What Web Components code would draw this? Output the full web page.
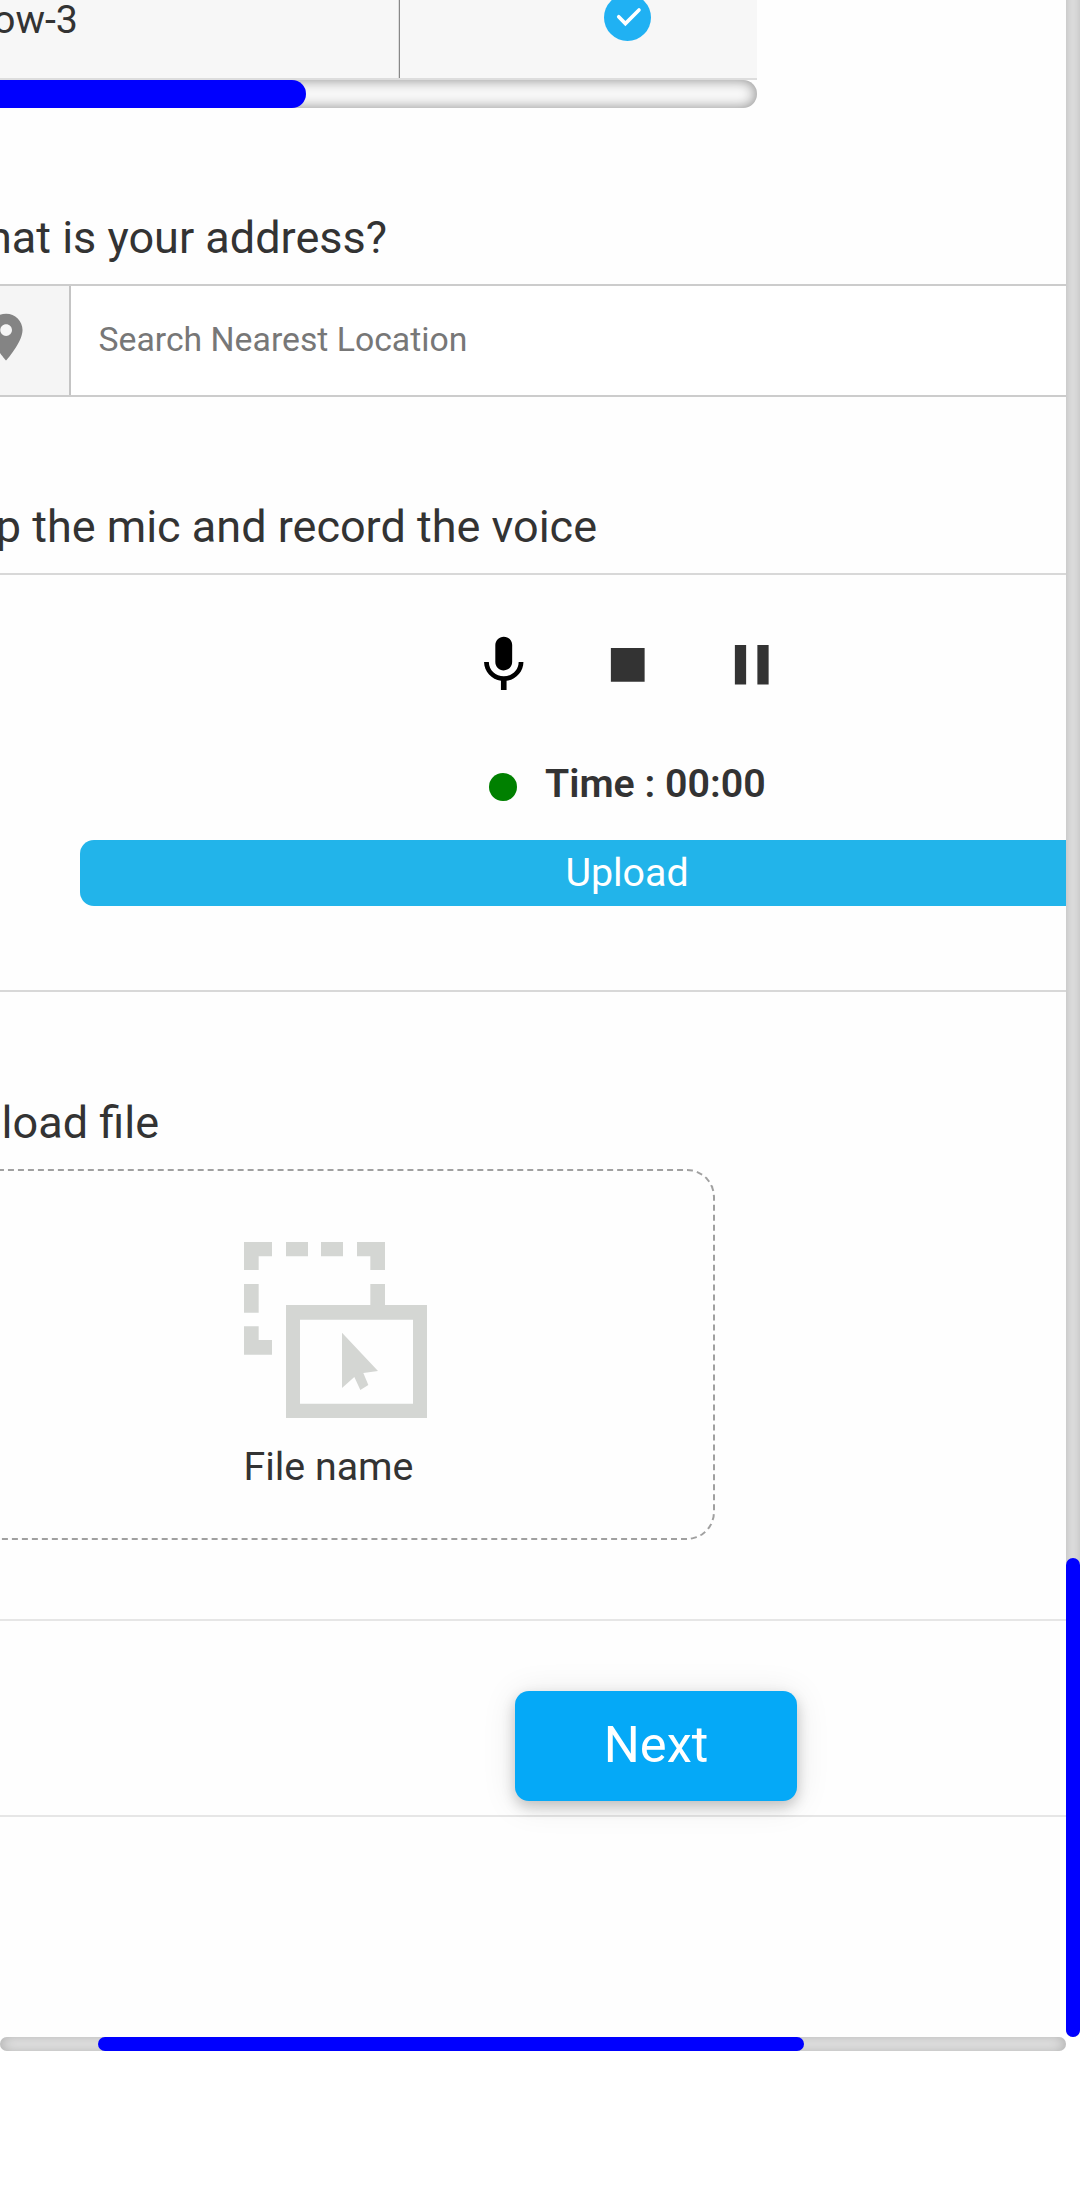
<!DOCTYPE html>
<html lang="en">
<head>
<meta charset="utf-8">
<title>Survey form</title>
<style>
html,body{margin:0;padding:0;background:#fff}
body{width:1080px;height:2208px;overflow:hidden;font-family:Roboto,"Liberation Sans",sans-serif;color:#333}
</style>
</head>
<body>
<survey-page>
  <matrix-table label="Row-3"></matrix-table>
  <form-heading style="--end:387px;--top:100px">What is your address?</form-heading>
  <address-search placeholder="Search Nearest Location"></address-search>
  <form-heading style="--end:597px;--top:100px">Tap the mic and record the voice</form-heading>
  <voice-recorder time="Time : 00:00">Upload</voice-recorder>
  <form-heading style="--end:159px;--top:101px">Upload file</form-heading>
  <file-drop>File name</file-drop>
  <form-footer>Next</form-footer>
</survey-page>
<script>
function define(name, html) {
  const tpl = document.createElement('template');
  tpl.innerHTML = html;
  customElements.define(name, class extends HTMLElement {
    constructor() {
      super();
      this.attachShadow({mode: 'open'}).append(tpl.content.cloneNode(true));
    }
    connectedCallback() {
      this.shadowRoot.querySelectorAll('[data-attr]').forEach(n => {
        n.textContent = this.getAttribute(n.dataset.attr) || '';
      });
    }
  });
}

define('scroll-bar', `
<style>
:host{display:flex;box-sizing:border-box;border-radius:14px;background:var(--track,#eee);box-shadow:inset 0 0 var(--blur,14px) var(--shade,#aaa)}
:host([axis=y]){flex-direction:column}
.lead{flex:0 0 var(--start,0px)}
.thumb{flex:0 0 var(--size);border-radius:var(--thumb-radius,14px);background:#00f}
</style><div class="lead"></div><div class="thumb"></div>`);

define('survey-page', `
<style>
:host{display:grid;grid-template:2037px 14px / 1066px 14px;width:1080px;height:2208px;overflow:hidden}
main{display:flex;flex-direction:column;overflow:hidden;background:#fefefe;min-width:0}
.v{--start:1558px;--size:479px;height:2057px;margin-top:-20px;--start:1578px}
.h{--start:98px;--size:706px}
</style>
<main><slot></slot></main>
<scroll-bar class="v" axis="y"></scroll-bar>
<scroll-bar class="h"></scroll-bar>`);

define('matrix-table', `
<style>
:host{display:block;width:757px;height:108px;flex:none}
.row{display:flex;height:117px;margin-top:-39px;background:#f7f7f7;border-bottom:2px solid #ddd;font-size:39.375px;line-height:50px}
.name{box-sizing:border-box;width:400px;padding-right:321px;display:flex;align-items:center;justify-content:flex-end;white-space:nowrap;border-right:1px solid #888;box-shadow:inset -1px 0 #ddd}
.pick{flex:1;display:flex;align-items:center;padding-left:204px}
svg{display:block;width:47px;height:47px;margin-top:-4px}
scroll-bar{width:757px;height:28px;--track:#fafafa;--shade:#888;--size:306px;--thumb-radius:0 14px 14px 0;border-radius:0 14px 14px 0}
</style>
<div class="row"><div class="name"><span data-attr="label"></span></div>
<div class="pick"><svg viewBox="0 0 47 47"><circle cx="23.5" cy="23.5" r="23.5" fill="#20b1f3"/><path d="M14.7 23l6.7 6.9L35 16.3" transform="translate(0 -.3)" fill="none" stroke="#fff" stroke-width="3.6" stroke-linecap="round"/></svg></div></div>
<scroll-bar></scroll-bar>`);

define('form-heading', `
<style>
:host{display:flex;flex:none;justify-content:flex-end;width:var(--end);margin-top:var(--top);height:60px;margin-bottom:16px;font-size:45px;line-height:60px;white-space:nowrap}
</style><span><slot></slot></span>`);

define('address-search', `
<style>
:host{display:flex;flex:none;height:109px;border:solid #ccc;border-width:2px 0;background:#fff}
.pin{width:69px;background:#f5f5f5;border-right:2px solid #c4c4c4;display:flex;align-items:center}
svg{display:block;flex:none;width:56.25px;height:56.25px;margin:-7px 0 0 -21.8px}
.field{flex:1;padding:0 0 2px 27.5px;display:flex;align-items:center;font-size:33.75px;line-height:44px;color:#777}
</style>
<div class="pin"><svg viewBox="0 0 24 24"><path fill="#848484" d="M12 2C8.13 2 5 5.13 5 9c0 5.25 7 13 7 13s7-7.75 7-13c0-3.87-3.13-7-7-7zm0 9.500c-1.380 0-2.500-1.120-2.500-2.500s1.120-2.500 2.500-2.500 2.500 1.120 2.500 2.500-1.120 2.500-2.500 2.500z"/></svg></div>
<div class="field"><span data-attr="placeholder"></span></div>`);

define('voice-recorder', `
<style>
:host{display:flex;flex:none;flex-direction:column;box-sizing:border-box;height:419px;border:solid #d8d8d8;border-width:2px 0}
.tools{display:flex;gap:56.25px;height:67.5px;padding:55.5px 0 0 470px}
svg{display:block;width:67.5px;height:67.5px}
.time{display:flex;align-items:center;height:50px;margin-top:61px;padding-left:489px;font-size:39.375px;line-height:50px;font-weight:600;white-space:nowrap}
.dot{width:28px;height:28px;border-radius:50%;background:green;margin:5px 28px 0 0}
.upload{width:1094px;height:66px;margin:31px 0 0 80px;border-radius:14px;background:#22b4ea;color:#fff;font-size:39.375px;line-height:65px;text-align:center}
</style>
<div class="tools">
<svg viewBox="0 0 24 24"><path d="M12 14c1.660 0 2.990-1.340 2.990-3L15 5c0-1.660-1.340-3-3-3S9 3.340 9 5v6c0 1.660 1.340 3 3 3zm5.300-3c0 3-2.540 5.100-5.300 5.100S6.700 14 6.700 11H5c0 3.410 2.720 6.230 6 6.720V21h2v-3.280c3.280-.48 6-3.300 6-6.720h-1.700z"/></svg>
<svg viewBox="0 0 24 24"><path fill="#333" d="M6 6h12v12H6z"/></svg>
<svg viewBox="0 0 24 24"><path fill="#333" d="M6 19h4V5H6v14zm8-14v14h4V5h-4z"/></svg>
</div>
<div class="time"><i class="dot"></i><span data-attr="time"></span></div>
<div class="upload"><slot></slot></div>`);

define('file-drop', `
<style>
:host{display:block;flex:none;height:450px}
.box{box-sizing:border-box;width:775px;height:371px;margin-left:-60px;padding:71px 0 0 302px;border:2px dashed #a0a0a0;border-radius:28px;display:flex;flex-direction:column;align-items:flex-start}
svg{display:block;width:183px;height:176px;flex:none}
span{margin-top:24px;margin-left:-.6px;font-size:39.375px;line-height:50px}
</style>
<div class="box">
<svg viewBox="72 66 549 528" fill="#d4d6d3">
<path d="M72 66h84v43h-40v41H72zM198 66h66v43h-66zM303 66h66v43h-66zM411 66h84v84h-44v-41h-40zM451 192h44v64h-44zM72 192h44v86H72zM72 319h44v41h40v44H72z"/>
<path fill-rule="evenodd" d="M198 255h423v339H198zM240 299v252h339V299z"/>
<path d="M366 338l108 115-44 6 15 36-24 15-18-39-37 33z"/>
</svg>
<span><slot></slot></span></div>`);

define('form-footer', `
<style>
:host{display:flex;flex:none;box-sizing:border-box;height:198px;border:solid #e6e6e6;border-width:2px 0;padding:70px 0 0 515px}
.btn{width:282px;height:110px;border-radius:14px;background:#05a9f7;color:#fff;text-align:center;font-size:50.625px;line-height:107px;box-shadow:0 6px 14px rgba(0,0,0,.2),0 3px 34px rgba(0,0,0,.1)}
</style><div class="btn"><slot></slot></div>`);
</script>
</body>
</html>
